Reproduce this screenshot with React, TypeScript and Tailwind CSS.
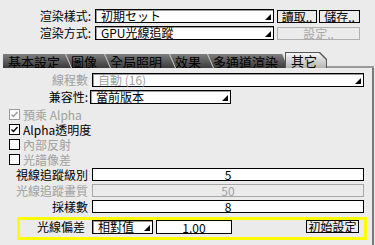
import React from "react";

function Arrow() {
  return (
    <svg width="6" height="6" viewBox="0 0 6 6" className="shrink-0 self-end mb-[2px] mr-[2px]">
      <polygon points="6,0 6,6 0,6" fill="#000" />
    </svg>
  );
}

function Dropdown({ text, w, gray }: { text: string; w: string; gray?: boolean }) {
  return (
    <div className={`flex h-[14px] border border-black bg-white shadow-[inset_1px_1px_0_#9a9a9a] ${w}`}>
      <div
        className={`flex-1 flex items-center pl-[5px] text-[12px] leading-[12px] whitespace-nowrap ${
          gray ? "text-[#a0a0a0]" : "text-black"
        }`}
      >
        {text}
      </div>
      <Arrow />
    </div>
  );
}

function Btn({ children, w, disabled }: { children: React.ReactNode; w: string; disabled?: boolean }) {
  return (
    <div
      className={`h-[13px] flex items-center justify-center leading-[11px] border ${
        disabled ? "border-[#b0b0b0] text-[#a8a8a8]" : "border-black text-black"
      } ${w}`}
    >
      {children}
    </div>
  );
}

function Check({ checked, boxGray, labelGray, label }: { checked?: boolean; boxGray?: boolean; labelGray?: boolean; label: string }) {
  return (
    <div className="flex items-center h-[15px] pl-[9px]">
      <div
        className={`w-[11px] h-[11px] border bg-white flex items-center justify-center ${
          boxGray ? "border-[#9a9a9a]" : "border-black"
        }`}
      >
        {checked && (
          <svg width="9" height="9" viewBox="0 0 9 9">
            <path d="M1.5 4.5 L3.5 6.5 L7.5 2" fill="none" stroke={boxGray ? "#9a9a9a" : "#000"} strokeWidth="1.4" />
          </svg>
        )}
      </div>
      <div className={`ml-[3px] h-[13px] flex items-center leading-[12px] ${labelGray ? "text-[#a0a0a0]" : "text-black"}`}>{label}</div>
    </div>
  );
}

function Field({ label, value, disabled }: { label: string; value: string; disabled?: boolean }) {
  return (
    <div className="flex items-center h-[13px]">
      <div className={`w-[88px] text-right leading-[12px] whitespace-nowrap ${disabled ? "text-[#a0a0a0]" : "text-black"}`}>{label}</div>
      <div
        className={`ml-[4px] w-[272px] h-[13px] border flex items-center justify-center leading-[11px] ${
          disabled ? "border-[#a8a8a8] text-[#a0a0a0]" : "border-black bg-white text-black"
        }`}
      >
        {value}
      </div>
    </div>
  );
}

function Tab({ label, w, z }: { label: string; w: string; z: string }) {
  return (
    <div className={`relative h-[14px] -mr-[6px] bg-[#cfcfcf] [clip-path:polygon(0_0,calc(100%_-_6px)_0,100%_100%,0_100%)] ${w} ${z}`}>
      <div className="absolute inset-0 bg-[linear-gradient(to_bottom,#7e7e7e,#3a3a3a)] [clip-path:polygon(0_0,calc(100%_-_7px)_0,calc(100%_-_1px)_100%,0_100%)] flex items-center pl-[5px] text-[13px] leading-[13px] text-black whitespace-nowrap">
        {label}
      </div>
    </div>
  );
}

export default function App() {
  return (
    <div className="w-[375px] h-[245px] overflow-hidden bg-[#ebebeb] text-[12px] text-black font-['Noto_Sans_CJK_TC','Noto_Sans_CJK_JP',sans-serif]">
      <div className="pt-[9px] flex flex-col gap-[3px]">
        <div className="flex items-center h-[14px]">
          <div className="w-[91px] text-right leading-[12px]">渲染樣式:</div>
          <div className="ml-[4px]">
            <Dropdown text="初期セット" w="w-[179px]" />
          </div>
          <div className="ml-[3px]">
            <Btn w="w-[40px]">讀取..</Btn>
          </div>
          <div className="ml-[2px]">
            <Btn w="w-[41px]">儲存..</Btn>
          </div>
        </div>
        <div className="flex items-center h-[14px]">
          <div className="w-[91px] text-right leading-[12px]">渲染方式:</div>
          <div className="ml-[4px]">
            <Dropdown text="GPU光線追蹤" w="w-[179px]" />
          </div>
          <div className="ml-[3px]">
            <Btn w="w-[83px]" disabled>
              設定..
            </Btn>
          </div>
        </div>
      </div>

      <div className="w-[374px] mt-[12px]">
        <div className="flex items-end pl-[3px] h-[16px]">
          <Tab label="基本設定" w="w-[69px]" z="z-[6]" />
          <Tab label="圖像" w="w-[45px]" z="z-[5]" />
          <Tab label="全局照明" w="w-[71px]" z="z-[4]" />
          <Tab label="效果" w="w-[44px]" z="z-[3]" />
          <Tab label="多通道渲染" w="w-[81px]" z="z-[2]" />
          <div className="relative z-[10] w-[42px] h-[16px] bg-[#555] [clip-path:polygon(0_0,calc(100%_-_7px)_0,100%_7px,100%_100%,0_100%)] ml-[2px]">
            <div className="absolute left-[1px] top-[1px] right-[1px] bottom-0 bg-[linear-gradient(to_bottom,#f6f6f6,#b4b4b4)] [clip-path:polygon(0_0,calc(100%_-_7px)_0,100%_7px,100%_100%,0_100%)] flex items-center pl-[5px] text-[13px] leading-[13px] text-black">
              其它
            </div>
          </div>
          <div className="flex-1 h-[2px] bg-[#9a9a9a]" />
        </div>

        <div className="border-r-2 border-[#7a7a7a] h-[180px] pt-[5px] flex flex-col">
          <div className="flex items-center h-[14px]">
            <div className="w-[88px] text-right leading-[12px] text-[#a0a0a0]">線程數</div>
            <div className="ml-[4px]">
              <Dropdown text="自動 (16)" w="w-[272px]" gray />
            </div>
          </div>
          <div className="flex items-center h-[14px] mt-[3px]">
            <div className="w-[88px] text-right leading-[12px]">兼容性:</div>
            <div className="ml-[2px]">
              <Dropdown text="當前版本" w="w-[141px]" />
            </div>
          </div>
          <div className="mt-[3px]">
            <Check checked boxGray labelGray label="預乘 Alpha" />
            <Check checked label="Alpha透明度" />
            <Check labelGray label="內部反射" />
            <Check labelGray label="光譜像差" />
          </div>
          <div className="mt-[1px] flex flex-col gap-[3px]">
            <Field label="視線追蹤級別" value="5" />
            <Field label="光線追蹤畫質" value="50" disabled />
            <Field label="採樣數" value="8" />
          </div>
          <div className="mt-[4px] ml-[17px] w-[350px] h-[23px] border-[3px] border-[#ffff00] flex items-start">
            <div className="w-[65px] text-right leading-[12px] pt-[1px]">光線偏差</div>
            <div className="ml-[7px]">
              <Dropdown text="相對值" w="w-[61px]" />
            </div>
            <div className="ml-[3px] w-[76px] h-[14px] border border-black bg-white flex items-center justify-center leading-[11px]">
              1.00
            </div>
            <div className="flex-1" />
            <div className="mr-[5px]">
              <Btn w="w-[53px]">初始設定</Btn>
            </div>
          </div>
        </div>
      </div>
    </div>
  );
}
